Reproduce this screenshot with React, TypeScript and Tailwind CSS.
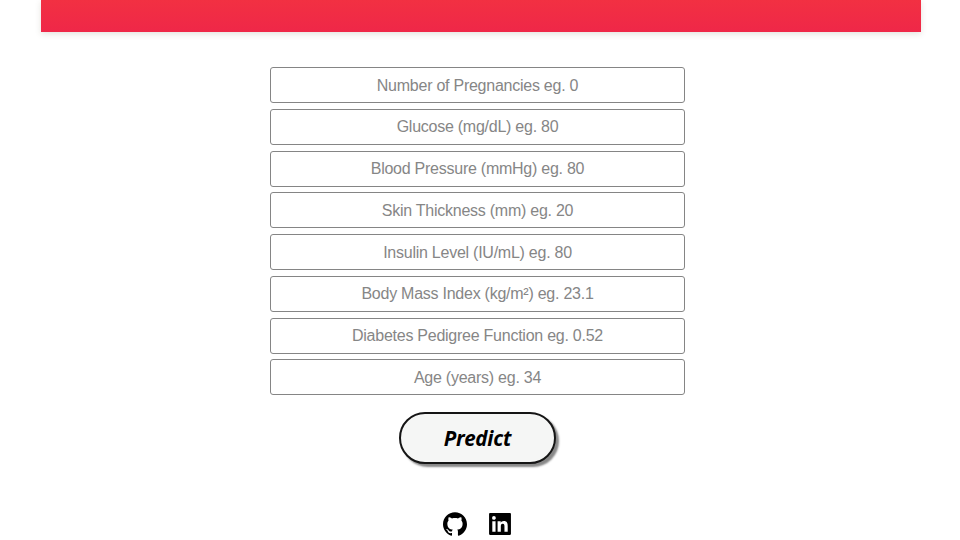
import { AiFillLinkedin } from "react-icons/ai";
import { SiGithub } from "react-icons/si";

const fields = [
  "Number of Pregnancies eg. 0",
  "Glucose (mg/dL) eg. 80",
  "Blood Pressure (mmHg) eg. 80",
  "Skin Thickness (mm) eg. 20",
  "Insulin Level (IU/mL) eg. 80",
  "Body Mass Index (kg/m²) eg. 23.1",
  "Diabetes Pedigree Function eg. 0.52",
  "Age (years) eg. 34",
];

export default function App() {
  return (
    <div className="h-[540px] w-[960px] overflow-hidden bg-white">
      <header className="ml-[41px] h-8 w-[880px] bg-linear-to-b from-[#f23042] to-[#ef2748] shadow-[0_2px_6px_rgba(90,80,50,0.16)]" />
      <main className="ml-[270px] flex w-[415px] flex-col items-center pt-[35px]">
        <form className="flex w-full flex-col gap-[5.75px]">
          {fields.map((label) => (
            <input
              key={label}
              type="text"
              placeholder={label}
              className="h-9 w-full rounded-[3px] border border-[#858585] bg-white pt-px text-center font-['Liberation_Sans',Arial,sans-serif] text-base tracking-[-0.25px] text-[#333] placeholder:text-[#868686]"
            />
          ))}
        </form>
        <button className="mt-[17px] h-[52px] w-[157px] rounded-full border-2 border-[#151515] bg-[#f5f6f5] font-['Noto_Sans',sans-serif] text-[20.5px] font-bold tracking-[-0.2px] text-black italic shadow-[3px_3px_2px_#888]">
          Predict
        </button>
        <footer className="mt-[46px] flex items-center gap-[19px] pl-px text-black">
          <SiGithub size={24} />
          <AiFillLinkedin size={28} />
        </footer>
      </main>
    </div>
  );
}
